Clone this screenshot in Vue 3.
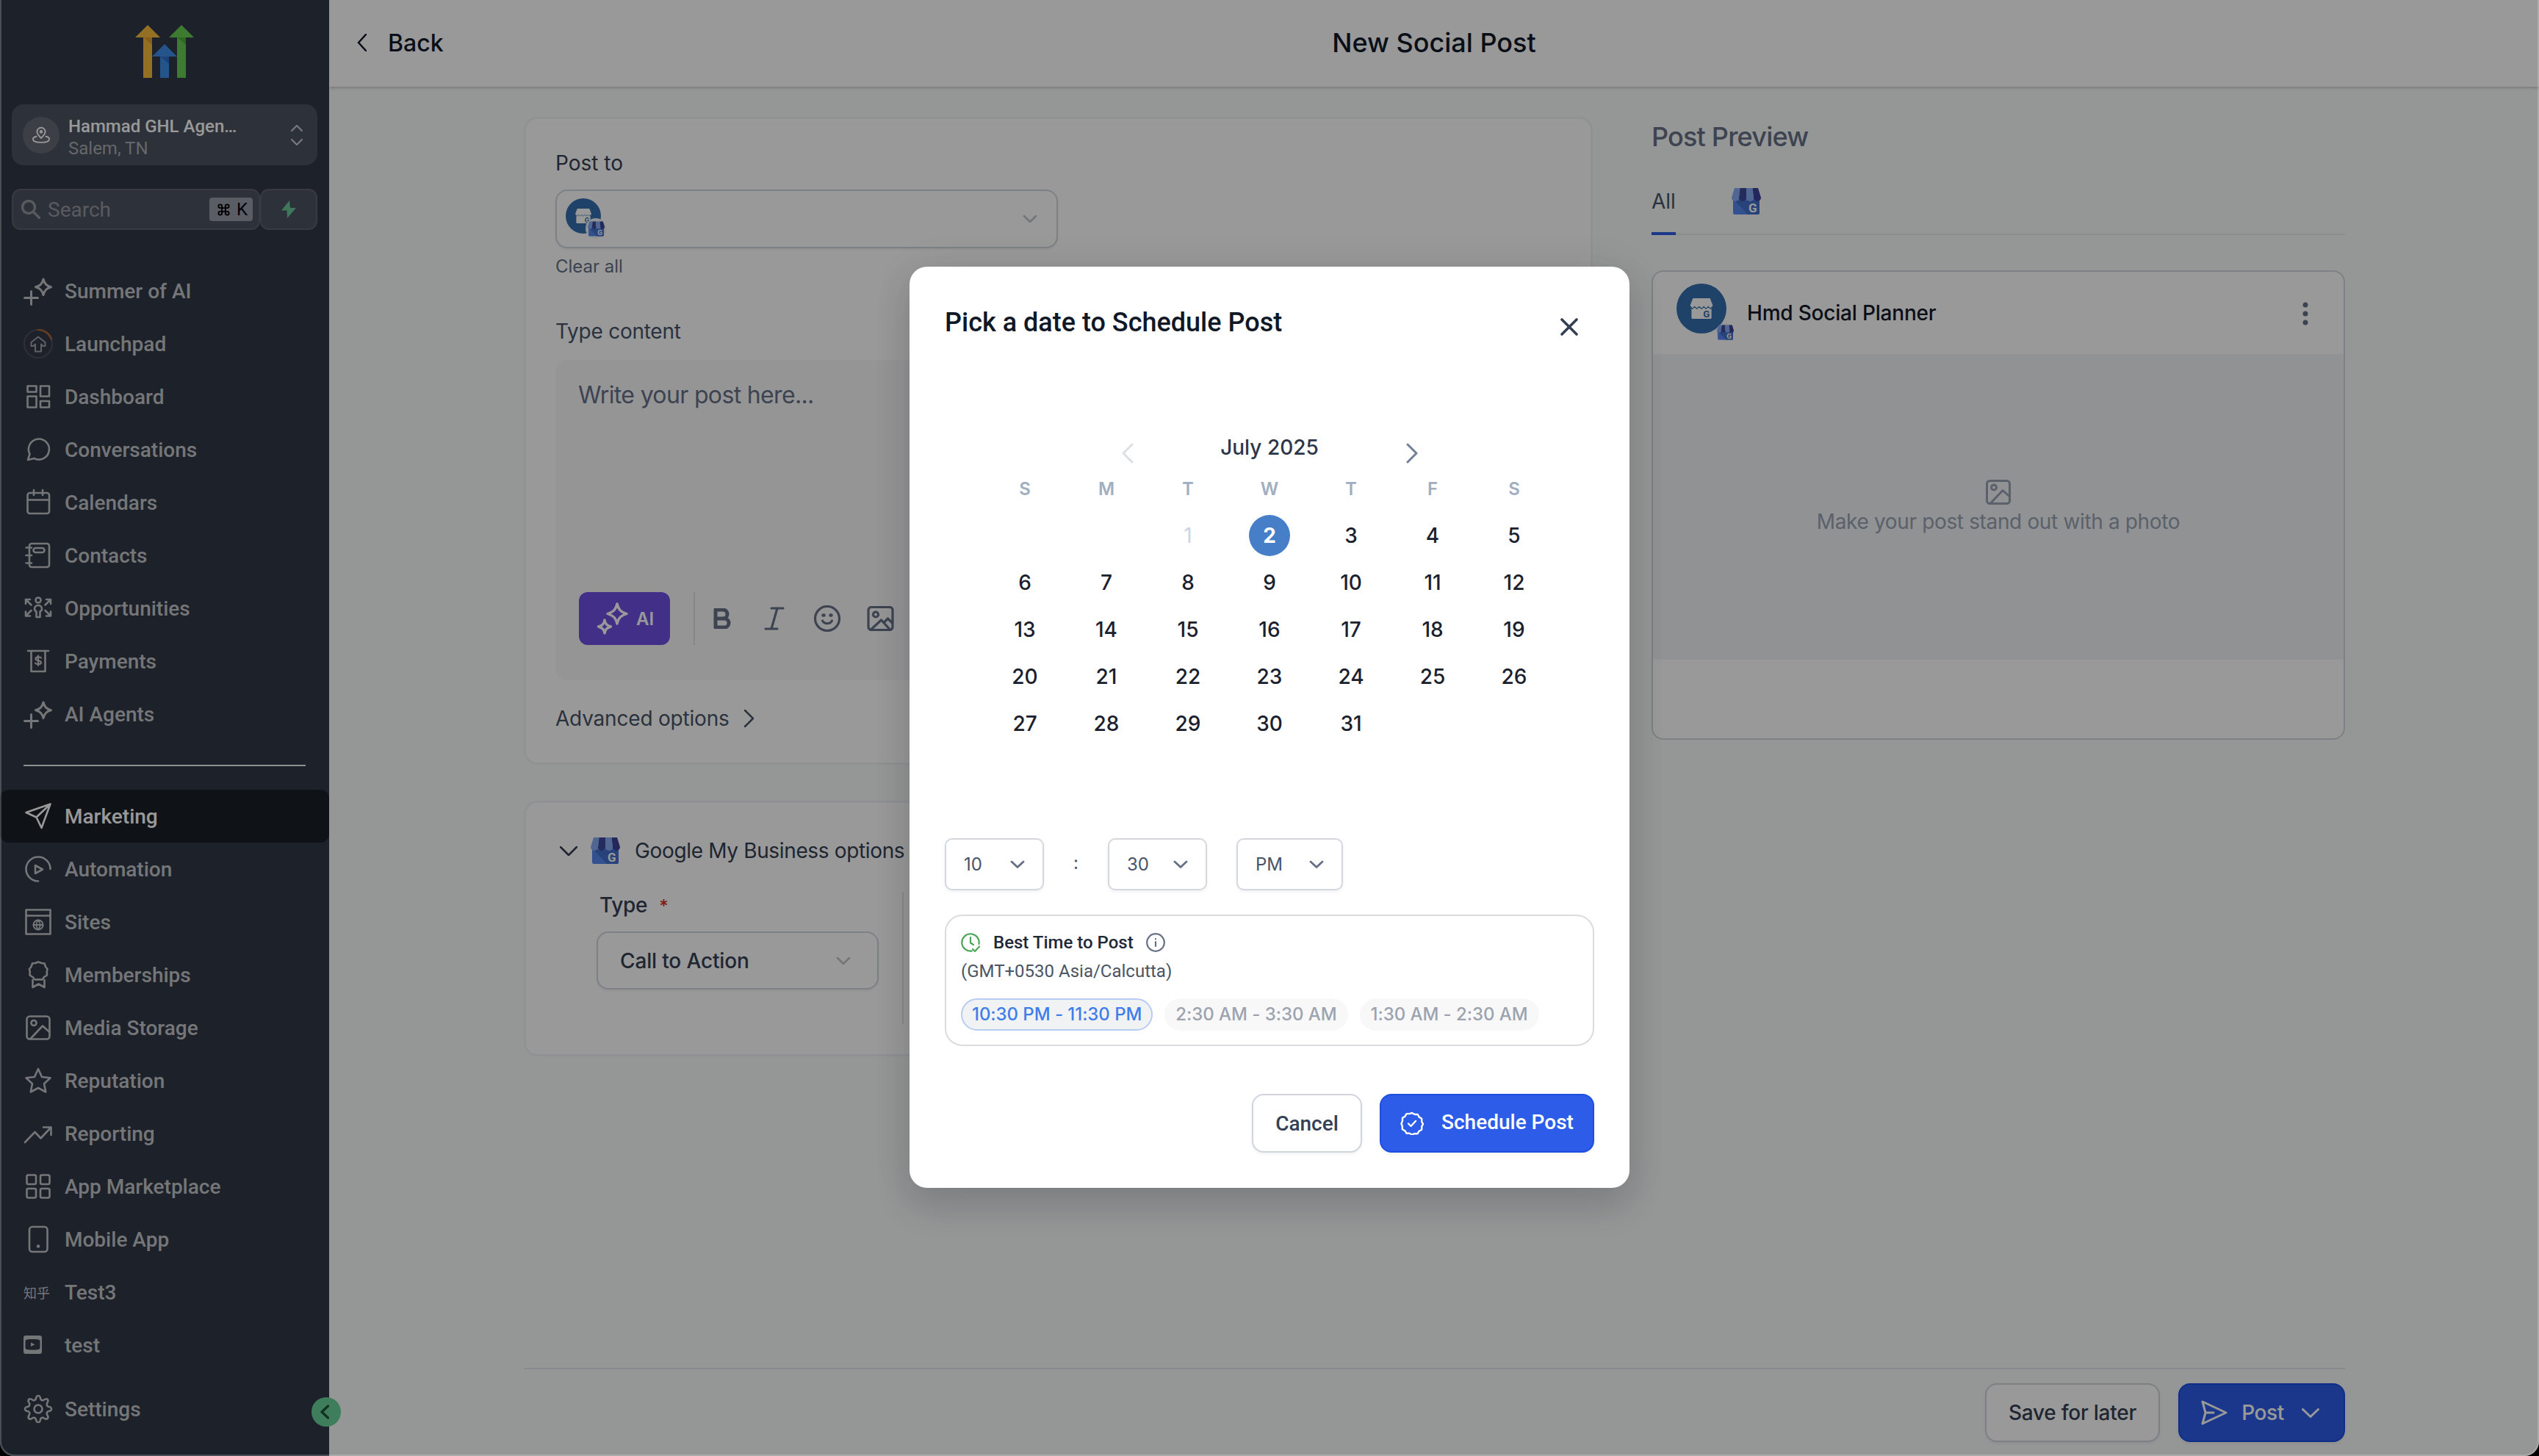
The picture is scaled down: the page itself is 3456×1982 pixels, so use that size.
<template>
  <div class="app">
    <!-- shared storefront artwork -->
    <svg class="sprite" aria-hidden="true">
      <symbol id="store" viewBox="0 0 40 36">
        <path d="M2 13h36v20.500a2.500 2.500 0 0 1-2.500 2.500h-31a2.500 2.500 0 0 1-2.500-2.500z" fill="#5588ee" />
        <path d="M4 17L22 36H35.500a2.500 2.500 0 0 0 2.500-2.500V17z" fill="#4471cc" />
        <path d="M4 0h7.500L10 13a5 5 0 0 1-10 0z" fill="#85abf5" />
        <path d="M11.500 0H20v13a5 5 0 0 1-10 0z" fill="#3d4a9c" />
        <path d="M20 0h8.500L30 13a5 5 0 0 1-10 0z" fill="#85abf5" />
        <path d="M28.500 0H36l4 13a5 5 0 0 1-10 0z" fill="#3d4199" />
      </symbol>
      <symbol id="shop" viewBox="0 0 40 36">
        <path d="M5 0h30l5 13-2.500 5V34a2 2 0 0 1-2 2h-31a2 2 0 0 1-2-2V18L0 13z" fill="#fff" />
        <path class="zigzag" d="M1 14.500l3 4 4-4 4 4 4-4 4 4 4-4 4 4 4-4 4 4 3-4" />
      </symbol>
    </svg>

    <aside class="sidebar">
      <svg class="logo" viewBox="0 0 80 72">
        <path d="M17 0l17 17H0z" fill="#f5bb3c" />
        <path d="M11 17h12v55H11z" fill="#f5bb3c" />
        <path d="M11 17h12v10z" fill="#dc9f30" />
        <path d="M63 0l17 17H46z" fill="#68cc50" />
        <path d="M57 17h12v55H57z" fill="#68cc50" />
        <path d="M57 17h12v10z" fill="#4fae35" />
        <path d="M40 26l17 17H23z" fill="#3f8bea" />
        <path d="M34 43h12v29H34z" fill="#3f8bea" />
        <path d="M34 43h12v10z" fill="#2f6fd0" />
      </svg>

      <div class="account">
        <div class="account-pin">
          <svg viewBox="0 0 24 24" v-html="icons.pin" />
        </div>
        <div class="account-text">
          <div class="account-name">Hammad GHL Agen…</div>
          <div class="account-place">Salem, TN</div>
        </div>
        <svg class="account-arrows" viewBox="0 0 16 28">
          <path d="M1 8l7-7 7 7M1 20l7 7 7-7" />
        </svg>
      </div>

      <div class="search-row">
        <div class="search">
          <svg class="search-icon" viewBox="0 0 26 26"><circle cx="10" cy="10" r="8.500" /><path d="M16 16l8.500 8.500" /></svg>
          <span>Search</span>
          <kbd>
            <svg class="cmd" viewBox="0 0 24 24"><path d="M9 9h6v6H9zM9 9H6a3 3 0 1 1 3-3zM15 9V6a3 3 0 1 1 3 3zM15 15h3a3 3 0 1 1-3 3zM9 15v3a3 3 0 1 1-3-3z" /></svg>
            K
          </kbd>
        </div>
        <div class="bolt">
          <svg viewBox="0 0 22 24"><path d="M12 0L1 13.500h7.500L9 24 21 10h-8z" stroke-linejoin="round" /></svg>
        </div>
      </div>

      <nav class="nav">
        <div v-for="item in topNav" :key="item.label" class="nav-item">
          <svg viewBox="0 0 40 40" v-html="icons[item.icon]" />
          <span>{{ item.label }}</span>
        </div>
      </nav>
      <div class="nav-divider"></div>
      <nav class="nav">
        <div v-for="item in bottomNav" :key="item.label" class="nav-item" :class="{ active: item.active }">
          <span v-if="item.icon === 'zhihu'" class="zhihu">知乎</span>
          <svg v-else viewBox="0 0 40 40" v-html="icons[item.icon]" />
          <span>{{ item.label }}</span>
        </div>
      </nav>
      <div class="nav-item settings">
        <svg viewBox="0 0 40 40" v-html="icons.gear" />
        <span>Settings</span>
      </div>
      <div class="collapse">
        <svg viewBox="0 0 12 20"><path d="M10.500 2L2 10l8.500 8" /></svg>
      </div>
    </aside>

    <main class="main">
      <header class="topbar">
        <div class="back">
          <svg viewBox="0 0 13 24"><path d="M12 1L2 12l10 11" /></svg>
          <span>Back</span>
        </div>
        <h1>New Social Post</h1>
      </header>

      <div class="content">
        <section class="composer">
          <div class="card editor-card">
            <div class="label dark">Post to</div>
            <div class="select account-select">
              <div class="avatar small">
                <svg class="avatar-shop" viewBox="0 0 40 36"><use href="#shop" /><text class="g blue" x="23" y="34">G</text></svg>
                <div class="avatar-badge"><svg viewBox="0 0 40 36"><use href="#store" /><text class="g" x="23" y="33">G</text></svg></div>
              </div>
              <svg class="chev" viewBox="0 0 20 10"><path d="M2 1l8 8 8-8" /></svg>
            </div>
            <div class="clear">Clear all</div>
            <div class="label type-content">Type content</div>
            <div class="editor">
              <div class="placeholder">Write your post here...</div>
              <div class="toolbar">
                <div class="ai-button">
                  <svg viewBox="0 0 44 44">
                    <path d="M28 2c2 8 5 11 13 13.500-8 2.500-11 5.500-13 13.500-2-8-5-11-13-13.500 8-2.500 11-5.500 13-13.500z" />
                    <path d="M11 24c1 5.500 3 7.500 8.500 9-5.500 1.500-7.500 3.500-8.500 9-1-5.500-3-7.500-8.500-9 5.500-1.500 7.500-3.500 8.500-9z" />
                  </svg>
                  AI
                </div>
                <div class="tool-divider"></div>
                <div class="tools">
                  <svg class="tool-b" viewBox="0 0 24 28"><path d="M3 2h10a6 6 0 0 1 0 12H3zM3 14h12a6 6 0 0 1 0 12H3z" /></svg>
                  <svg class="tool-i" viewBox="0 0 28 32"><path d="M10 2h16M2 30h16M18 2L10 30" /></svg>
                  <svg class="tool-s" viewBox="0 0 36 36"><circle cx="18" cy="18" r="16.500" /><path d="M11.500 21c3 5 10 5 13 0" /><path d="M12.500 13.500h1M22.500 13.500h1" stroke-width="4.500" /></svg>
                  <svg class="tool-m" viewBox="0 0 36 34"><rect x="1.500" y="1.500" width="33" height="31" rx="4" /><circle cx="11.500" cy="11.500" r="3.500" /><path d="M5 32l14-13 11 12M23 22l5-5 6 6" /></svg>
                </div>
              </div>
            </div>
            <div class="advanced">
              <span>Advanced options</span>
              <svg viewBox="0 0 13 24"><path d="M1 1l11 11L1 23" /></svg>
            </div>
          </div>

          <div class="card gmb-card">
            <div class="gmb-head">
              <svg class="gmb-chev" viewBox="0 0 24 13"><path d="M1 1l11 11L23 1" /></svg>
              <svg class="store" viewBox="0 0 40 36"><use href="#store" /><text class="g" x="23" y="33">G</text></svg>
              <span>Google My Business options</span>
            </div>
            <div class="gmb-body">
              <div class="gmb-field">
                <div class="field-label">Type <em>*</em></div>
                <div class="select type-select">
                  <span>Call to Action</span>
                  <svg class="chev" viewBox="0 0 20 10"><path d="M2 1l8 8 8-8" /></svg>
                </div>
              </div>
              <div class="gmb-divider"></div>
            </div>
          </div>
        </section>

        <section class="preview">
          <h2>Post Preview</h2>
          <div class="tabs">
            <div class="tab">All</div>
            <svg class="store" viewBox="0 0 40 36"><use href="#store" /><text class="g" x="23" y="33">G</text></svg>
          </div>
          <div class="preview-card">
            <div class="preview-head">
              <div class="avatar">
                <svg class="avatar-shop" viewBox="0 0 40 36"><use href="#shop" /><text class="g blue" x="23" y="34">G</text></svg>
                <div class="avatar-badge"><svg viewBox="0 0 40 36"><use href="#store" /><text class="g" x="23" y="33">G</text></svg></div>
              </div>
              <span>Hmd Social Planner</span>
              <svg class="kebab" viewBox="0 0 8 32"><circle cx="4" cy="4" r="3.500" /><circle cx="4" cy="16" r="3.500" /><circle cx="4" cy="28" r="3.500" /></svg>
            </div>
            <div class="preview-photo">
              <svg viewBox="0 0 40 40" v-html="icons.media" />
              <span>Make your post stand out with a photo</span>
            </div>
          </div>
        </section>
      </div>

      <footer class="footer">
        <div class="btn save-btn">Save for later</div>
        <div class="btn primary post-btn">
          <svg class="send" viewBox="0 0 36 34"><path d="M2 2l32 15L2 32l4-15zM6 17h11" /></svg>
          <span>Post</span>
          <svg class="post-chev" viewBox="0 0 24 13"><path d="M1.500 1.500L12 11.500 22.500 1.500" /></svg>
        </div>
      </footer>
    </main>

    <div class="overlay">
      <div class="modal">
        <div class="modal-head">
          <h3>Pick a date to Schedule Post</h3>
          <svg viewBox="0 0 24 24"><path d="M2 2l20 20M22 2L2 22" /></svg>
        </div>

        <div class="calendar">
          <div class="month">
            <svg class="off" viewBox="0 0 16 28"><path d="M14 2L2 14l12 12" /></svg>
            <span>July 2025</span>
            <svg viewBox="0 0 16 28"><path d="M2 2l12 12L2 26" /></svg>
          </div>
          <div class="week">
            <span v-for="(d, i) in weekdays" :key="i">{{ d }}</span>
          </div>
          <div class="days">
            <div v-for="(day, i) in days" :key="i" class="day" :class="{ past: day === 1, selected: day === selected }">
              <span v-if="day">{{ day }}</span>
            </div>
          </div>
        </div>

        <div class="time">
          <div class="time-select">10 <svg viewBox="0 0 20 11"><path d="M2 2l8 7.500L18 2" /></svg></div>
          <div class="colon">:</div>
          <div class="time-select">30 <svg viewBox="0 0 20 11"><path d="M2 2l8 7.500L18 2" /></svg></div>
          <div class="time-select period">PM <svg viewBox="0 0 20 11"><path d="M2 2l8 7.500L18 2" /></svg></div>
        </div>

        <div class="best">
          <div class="best-head">
            <svg class="clock" viewBox="0 0 26 26"><path d="M24.500 15A11.700 11.700 0 1 0 15 24.500M13 6v7.500l4 2.500M16 22l3 3 6-6.500" /></svg>
            <span>Best Time to Post</span>
            <svg class="info" viewBox="0 0 26 26"><circle cx="13" cy="13" r="11.800" /><path d="M13 12v6M13 8v.3" /></svg>
          </div>
          <div class="best-zone">(GMT+0530 Asia/Calcutta)</div>
          <div class="chips">
            <span v-for="(slot, i) in slots" :key="slot" class="chip" :class="{ on: i === 0 }">{{ slot }}</span>
          </div>
        </div>

        <div class="actions">
          <div class="btn cancel">Cancel</div>
          <div class="btn primary schedule">
            <svg viewBox="0 0 32 32">
              <path d="M16 2l3.600 2 4.100 0 2 3.600 3.500 2.100 0 4.200L31 17l-1.800 3.600 0 4.100-3.500 2-2.100 3.500-4.100 0L16 31.500l-3.500-1.800-4.100 0-2.100-3.500-3.500-2 0-4.100L1.500 16.500l1.500-3.600 0-4.200 3.500-2 2-3.600 4.100 0z" />
              <path d="M11 16.500l3.500 3.500 6.500-7" />
            </svg>
            <span>Schedule Post</span>
          </div>
        </div>
      </div>
    </div>
    <div class="frame"></div>
  </div>
</template>

<script setup>
    import { ref } from 'vue';

    const sparkle = '<path d="M27 4c1.800 6.500 4 8.800 10.500 10.800-6.500 2-8.700 4.200-10.500 10.700-1.800-6.500-4-8.700-10.500-10.700C23 12.800 25.200 10.500 27 4z" stroke-width="3"/><path d="M10.500 20.500v18M1.500 29.500h18" stroke-width="3"/>';

    // drawn on a 40x40 grid, stroke is inherited from the nav item
    const icons = {
        pin: '<path d="M12 15.500c-3-3-4.800-5-4.800-7.500a4.800 4.800 0 0 1 9.600 0c0 2.500-1.800 4.500-4.800 7.500z"/><circle cx="12" cy="8" r="1.200"/><path d="M6.500 13.500c-2.500.6-4 1.700-4 3C2.500 19 6.500 20.500 12 20.500s9.500-1.500 9.500-4c0-1.300-1.500-2.400-4-3"/>',
        sparkle,
        launch: '<circle cx="20" cy="20" r="19" stroke="#4c525c" stroke-width="2"/><path d="M20 1a19 19 0 0 1 18 12.500" stroke="#a8663a" stroke-width="2.600"/><path d="M20 10.500l9.500 7.500v5h-3l-2.500-2.500v10h-8v-10L13.500 23h-3v-5z" stroke-width="2" stroke="#a0a2a6"/>',
        dashboard: '<path d="M5.500 5.500h12v8h-12zM23 5.500h12v14H23zM5.500 19.500h12v15h-12zM23 26h12v8.500H23z"/>',
        chat: '<path d="M6 34l2.500-8A14 14 0 1 1 14.500 32z"/>',
        calendar: '<rect x="5.500" y="7" width="29.500" height="28" rx="3"/><path d="M5.500 16.500H35M14 3v7M26 3v7"/>',
        contacts: '<rect x="8" y="4" width="27" height="32" rx="3"/><rect x="13.500" y="10" width="15" height="6" rx="3"/><path d="M3.500 9.500H11M3.500 20H11M3.500 30.500H11"/>',
        opps: '<circle cx="20" cy="9" r="3.500"/><path d="M20 16c-3.500 0-5 2.500-5 5 0 2 1.500 3 2.500 3.500V32h5v-7.500c1-.5 2.500-1.500 2.500-3.500 0-2.500-1.500-5-5-5z"/><path d="M3 14V8h6M3.500 8.500l7 7M37 14V8h-6M36.500 8.500l-7 7M3 24.500v6h6M3.500 30l7-7M37 24.500v6h-6M36.500 30l-7-7"/>',
        payments: '<path d="M6 6h28M10.500 6v28h19V6"/><path d="M24 15.500c-1-1.500-7.500-2-7.500 1.200 0 3.300 7.500 1.700 7.500 5 0 3-6.500 3-8 1M20 12.500v13.500" stroke-width="2.200"/>',
        send: '<path d="M36.500 3.500L3.500 15l14 6.500 7 14.500zM17.500 21.500l19-18"/>',
        automation: '<path d="M36.500 20A16.500 16.500 0 1 0 20 36.500"/><path d="M16 15v11l10-5.500z"/>',
        sites: '<path d="M3.500 3.500h33v33h-33zM3.500 11.500h33"/><circle cx="20" cy="24" r="6.500" stroke-width="2"/><path d="M13.500 24h13M20 17.500c-3.500 4-3.500 9 0 13M20 17.500c3.500 4 3.500 9 0 13" stroke-width="1.800"/>',
        badge: '<path d="M20 2.500l4.500 1.500 4 .5 1.500 4.500 2.500 3-.8 4.500.3 4-4 2.500-2.500 3.500-5-.2-5 .2-3-3.500-4-2.500.3-4-.8-4.500 2.500-3L12 4.500l4-.5z"/><path d="M12.500 27v10l8-4.500 8 4.500V27"/>',
        media: '<rect x="4.500" y="4.500" width="31" height="31" rx="4"/><circle cx="14" cy="13.500" r="3.500"/><path d="M9.500 35L26 17.500l9.500 8.500"/>',
        star: '<path d="M20 4l5 11 11.500 1.200-8.500 8 2.300 11.300L20 30l-10.300 5.500L12 24.200l-8.500-8L15 15z"/>',
        trend: '<path d="M2 32L15.500 18l8 8.500L37 12M27 11.500h10.500V22"/>',
        apps: '<rect x="4.500" y="4.500" width="12.500" height="12.500" rx="2"/><rect x="23" y="4.500" width="12.500" height="12.500" rx="2"/><rect x="4.500" y="23" width="12.500" height="12.500" rx="2"/><rect x="23" y="23" width="12.500" height="12.500" rx="2"/>',
        mobile: '<rect x="8" y="3" width="24.500" height="34" rx="4"/><circle cx="20" cy="29.500" r="1.500" fill="currentColor" stroke-width="1.500"/>',
        video: '<path d="M3 7h19a3 3 0 0 1 3 3v19a3 3 0 0 1-3 3H3a3 3 0 0 1-3-3V10a3 3 0 0 1 3-3zM5 12.500c-1.500 0-2.500 1-2.500 2.500v8.500c0 1.500 1 2.500 2.500 2.500 5 .7 10 .7 15 0 1.500 0 2.500-1 2.500-2.500V15c0-1.500-1-2.500-2.500-2.500-5-.6-10-.6-15 0z" fill="currentColor" fill-rule="evenodd" stroke="none"/><path d="M10 16.500v5.500l5.500-2.700z" fill="currentColor" stroke="none"/>',
        gear: '<path d="M17 5.500C17.500 2.500 18 2 20 2s2.500.5 3 3.500c.3 2.500 3 3.500 5 2 2.500-1.800 3.500-1.800 4.700-.5s1.300 2.300-.4 4.700c-1.500 2-.3 5 2.200 5.300 3 .5 3.500 1 3.500 3s-.5 2.500-3.500 3c-2.500.3-3.700 3.300-2.200 5.300 1.700 2.400 1.700 3.400.4 4.700s-2.200 1.300-4.700-.5c-2-1.500-4.700-.5-5 2-.5 3-1 3.500-3 3.500s-2.500-.5-3-3.500c-.3-2.500-3-3.500-5-2-2.500 1.800-3.500 1.800-4.700.5s-1.300-2.300.4-4.700c1.500-2 .3-5-2.200-5.300-3-.5-3.500-1-3.500-3s.5-2.500 3.500-3c2.500-.3 3.700-3.300 2.200-5.300C6 9.300 6 8.300 7.300 7s2.200-1.300 4.700.5c2 1.500 4.700.5 5-2z"/><circle cx="20" cy="20" r="5.500"/>',
    };

    const topNav = ref([
        { icon: 'sparkle', label: 'Summer of AI' },
        { icon: 'launch', label: 'Launchpad' },
        { icon: 'dashboard', label: 'Dashboard' },
        { icon: 'chat', label: 'Conversations' },
        { icon: 'calendar', label: 'Calendars' },
        { icon: 'contacts', label: 'Contacts' },
        { icon: 'opps', label: 'Opportunities' },
        { icon: 'payments', label: 'Payments' },
        { icon: 'sparkle', label: 'AI Agents' },
    ]);
    const bottomNav = ref([
        { icon: 'send', label: 'Marketing', active: true },
        { icon: 'automation', label: 'Automation' },
        { icon: 'sites', label: 'Sites' },
        { icon: 'badge', label: 'Memberships' },
        { icon: 'media', label: 'Media Storage' },
        { icon: 'star', label: 'Reputation' },
        { icon: 'trend', label: 'Reporting' },
        { icon: 'apps', label: 'App Marketplace' },
        { icon: 'mobile', label: 'Mobile App' },
        { icon: 'zhihu', label: 'Test3' },
        { icon: 'video', label: 'test' },
    ]);

    const weekdays = ['S', 'M', 'T', 'W', 'T', 'F', 'S'];
    const selected = ref(2);
    // July 2025 starts on a Tuesday
    const days = [null, null, ...Array.from({ length: 31 }, (_, i) => i + 1)];
    const slots = ['10:30 PM - 11:30 PM', '2:30 AM - 3:30 AM', '1:30 AM - 2:30 AM'];
</script>

<style>
  html, body {
    background: #000;
    overflow: hidden;
  }
</style>

<style scoped>
  * {
    box-sizing: border-box;
  }
  svg {
    display: block;
    flex: none;
    fill: none;
    stroke: currentColor;
    stroke-width: 2.6;
    stroke-linecap: round;
    stroke-linejoin: round;
  }
  h1, h2, h3 {
    margin: 0;
    font-weight: 500;
  }
  .app {
    position: relative;
    display: flex;
    width: 3456px;
    height: 1982px;
    overflow: hidden;
    border-radius: 0 0 20px 20px;
    background: #f9fafb;
    font-family: Inter, "Noto Sans", sans-serif;
    font-size: 28px;
    white-space: nowrap;
  }
  .sprite {
    position: absolute;
    width: 0;
    height: 0;
  }
  .sprite path {
    stroke: none;
  }
  .sprite .zigzag {
    stroke: #356fae;
    stroke-width: 1.4;
  }
  .g {
    fill: #fff;
    stroke: none;
    font: 700 17px Roboto, sans-serif;
  }
  .g.blue {
    fill: #356fae;
  }

  /* sidebar */
  .sidebar {
    position: relative;
    z-index: 1;
    width: 448px;
    height: 1982px;
    padding-top: 34px;
    background: #303747;
    color: #c3c5c8;
    font-family: Roboto, sans-serif;
  }
  .logo {
    width: 80px;
    height: 72px;
    margin: 0 auto;
    stroke: none;
  }
  .account {
    display: flex;
    align-items: center;
    height: 83px;
    margin: 36px 16px 0;
    padding: 0 20px 0 15px;
    border-radius: 16px;
    background: #4c535f;
    color: #fff;
  }
  .account-pin {
    display: flex;
    align-items: center;
    justify-content: center;
    width: 50px;
    height: 50px;
    border-radius: 50%;
    background: #656a74;
  }
  .account-pin svg {
    width: 28px;
    height: 28px;
    stroke-width: 1.6;
  }
  .account-text {
    flex: 1;
    padding: 6px 0 0 12px;
    font-size: 24px;
    line-height: 30px;
  }
  .account-name {
    font-weight: 500;
  }
  .account-place {
    color: #a9acb1;
  }
  .account-arrows {
    width: 16px;
    height: 28px;
    color: #c8cacd;
    stroke-width: 2.2;
  }
  .search-row {
    display: flex;
    margin: 32px 16px 0;
  }
  .search, .bolt {
    display: flex;
    align-items: center;
    height: 56px;
    border: 2px solid #5c616c;
    border-radius: 12px;
    background: #4c535f;
  }
  .search {
    width: 338px;
    padding: 0 8px 0 11px;
    color: #94979e;
  }
  .search span {
    flex: 1;
    padding-left: 10px;
  }
  .search-icon {
    width: 26px;
    height: 26px;
    stroke-width: 3.4;
  }
  .search kbd {
    display: flex;
    align-items: center;
    gap: 8px;
    height: 32px;
    width: 59px;
    padding-left: 10px;
    border-radius: 4px;
    background: #979ba6;
    color: #000;
    font-family: Roboto, sans-serif;
    font-size: 24px;
  }
  .cmd {
    width: 19px;
    height: 19px;
    stroke-width: 2.4;
  }
  .bolt {
    width: 78px;
    justify-content: center;
  }
  .bolt svg {
    width: 22px;
    height: 24px;
    fill: #68c698;
    stroke: none;
  }
  .nav {
    margin-top: 47px;
  }
  .nav-item {
    display: flex;
    align-items: center;
    gap: 16px;
    height: 72px;
    padding-left: 32px;
    font-weight: 500;
  }
  .nav-item svg {
    width: 40px;
    height: 40px;
  }
  .nav-item.active {
    border-radius: 12px;
    background: #1a1e27;
    color: #fff;
  }
  .zhihu {
    width: 40px;
    font: 400 18px "Noto Sans CJK SC", sans-serif;
  }
  .nav-divider {
    height: 2px;
    margin: 33px 32px 0;
    background: #eee;
  }
  .nav-divider + .nav {
    margin-top: 32px;
  }
  .settings {
    margin-top: 15px;
  }
  .collapse {
    position: absolute;
    left: 424px;
    top: 1902px;
    display: flex;
    align-items: center;
    justify-content: center;
    width: 40px;
    height: 40px;
    padding-right: 4px;
    border-radius: 50%;
    background: #68d399;
    color: #22543d;
  }
  .collapse svg {
    width: 12px;
    height: 20px;
    stroke-width: 3.4;
  }

  /* page */
  .main {
    display: flex;
    flex-direction: column;
    flex: 1;
    color: #344054;
  }
  .topbar {
    position: relative;
    display: flex;
    align-items: center;
    justify-content: center;
    height: 118px;
    padding-bottom: 2px;
    background: #fff;
    box-shadow: 0 2px 4px rgba(40, 60, 50, .22);
    color: #101828;
  }
  .topbar h1 {
    font-size: 36px;
  }
  .back {
    position: absolute;
    left: 38px;
    display: flex;
    align-items: center;
    gap: 29px;
    font-size: 32px;
    font-weight: 500;
  }
  .back svg {
    width: 13px;
    height: 24px;
  }
  .content {
    display: flex;
    flex: 1;
    gap: 80px;
    padding: 41px 0 0 265px;
  }
  .composer {
    width: 1455px;
  }
  .card {
    border: 3px solid #f0f2f5;
    border-radius: 18px;
    background: #fff;
  }
  .editor-card {
    height: 882px;
    padding: 42px 40px 0;
  }
  .label {
    line-height: 36px;
    color: #475467;
  }
  .label.dark {
    color: #344054;
  }
  .select {
    display: flex;
    align-items: center;
    justify-content: space-between;
    border: 2px solid #d0d5dd;
    border-radius: 16px;
    background: #fff;
    box-shadow: 0 2px 3px rgba(16, 24, 40, .05);
  }
  .chev {
    width: 20px;
    height: 10px;
    color: #c0c4cc;
  }
  .account-select {
    width: 684px;
    height: 80px;
    margin-top: 18px;
    padding: 0 26px 0 12px;
  }
  .avatar {
    position: relative;
    display: flex;
    align-items: center;
    justify-content: center;
    width: 68px;
    height: 68px;
    border-radius: 50%;
    background: #356fae;
  }
  .avatar-shop {
    width: 32px;
    height: 28px;
  }
  .avatar-badge {
    position: absolute;
    right: -10px;
    bottom: -10px;
    display: flex;
    align-items: center;
    justify-content: center;
    width: 24px;
    height: 24px;
    border-radius: 50%;
    background: #f2f4f7;
  }
  .avatar-badge svg {
    width: 23px;
    height: 21px;
  }
  .avatar.small {
    width: 48px;
    height: 48px;
    margin-bottom: 8px;
  }
  .small .avatar-shop {
    width: 22px;
    height: 20px;
  }
  .small .avatar-badge {
    right: -7px;
    bottom: -7px;
    width: 28px;
    height: 28px;
  }
  .clear {
    margin-top: 10px;
    font-size: 24px;
    line-height: 30px;
    color: #667085;
  }
  .type-content {
    margin-top: 55px;
    letter-spacing: -.25px;
  }
  .editor {
    display: flex;
    flex-direction: column;
    justify-content: space-between;
    height: 436px;
    margin-top: 21px;
    padding: 28px 32px 48px 31px;
    border-radius: 16px;
    background: #f8f9fb;
  }
  .placeholder {
    font-size: 32px;
    line-height: 40px;
    letter-spacing: -.65px;
    color: #667085;
  }
  .toolbar {
    display: flex;
    align-items: center;
    height: 72px;
    padding-left: 1px;
    color: #667085;
  }
  .ai-button {
    display: flex;
    align-items: center;
    gap: 10px;
    width: 124px;
    height: 72px;
    padding-left: 24px;
    border-radius: 12px;
    background: #6e4fe1;
    color: #fff;
    font-size: 24px;
    font-weight: 600;
  }
  .ai-button svg {
    width: 44px;
    height: 44px;
    stroke-width: 3.4;
  }
  .tool-divider {
    width: 2px;
    height: 72px;
    margin-left: 32px;
    background: #dfe2e7;
  }
  .tools {
    display: flex;
    align-items: center;
    padding-left: 25px;
  }
  .tools svg {
    stroke-width: 3.2;
  }
  .tools .tool-b {
    width: 24px;
    height: 28px;
    stroke-width: 5;
  }
  .tool-i {
    width: 28px;
    height: 32px;
    margin-left: 45px;
  }
  .tool-s {
    width: 36px;
    height: 36px;
    margin-left: 40px;
  }
  .tool-m {
    width: 37px;
    height: 34px;
    margin-left: 36px;
  }
  .advanced {
    display: flex;
    align-items: center;
    gap: 20px;
    height: 36px;
    margin-top: 34px;
    letter-spacing: -.2px;
    color: #475467;
  }
  .advanced svg {
    width: 13px;
    height: 24px;
  }
  .gmb-card {
    height: 348px;
    margin-top: 49px;
    padding-top: 45px;
  }
  .gmb-head {
    display: flex;
    align-items: center;
    height: 40px;
    padding-left: 46px;
    letter-spacing: -.35px;
  }
  .gmb-chev {
    width: 24px;
    height: 13px;
    margin-right: 18px;
  }
  .store {
    width: 40px;
    height: 36px;
  }
  .gmb-head span {
    padding-left: 20px;
  }
  .gmb-body {
    display: flex;
    gap: 32px;
    padding: 36px 0 0 96px;
  }
  .gmb-field {
    width: 384px;
  }
  .field-label {
    padding-left: 4px;
    line-height: 36px;
    letter-spacing: -.3px;
    font-weight: 500;
  }
  .field-label em {
    padding-left: 9px;
    color: #d92d20;
    font-size: 24px;
    font-style: normal;
  }
  .type-select {
    height: 79px;
    margin-top: 16px;
    padding: 0 36px 0 30px;
    letter-spacing: -.15px;
    font-weight: 500;
  }
  .gmb-divider {
    width: 2px;
    height: 180px;
    background: #e4e7ec;
  }

  /* preview column */
  .preview {
    width: 944px;
    padding-top: 5px;
  }
  .preview h2 {
    font-size: 36px;
    line-height: 44px;
    letter-spacing: -.8px;
    color: #667085;
  }
  .tabs {
    display: flex;
    height: 84px;
    margin-top: 28px;
    box-shadow: inset 0 -2px #e6e8ec;
  }
  .tab {
    height: 84px;
    border-bottom: 4px solid #2f5ae6;
    line-height: 76px;
    color: #475467;
  }
  .tabs .store {
    margin: 20px 0 0 76px;
  }
  .preview-card {
    height: 639px;
    margin-top: 48px;
    overflow: hidden;
    border: 2px solid #d0d5dd;
    border-radius: 16px;
    background: #fff;
  }
  .preview-head {
    display: flex;
    height: 112px;
    padding: 16px 48px 0 32px;
    color: #101828;
    font-weight: 500;
  }
  .preview-head span {
    flex: 1;
    padding-left: 28px;
    line-height: 80px;
    letter-spacing: -.2px;
  }
  .kebab {
    width: 8px;
    height: 32px;
    margin-top: 25px;
    fill: #667085;
    stroke: none;
  }
  .preview-photo {
    display: flex;
    flex-direction: column;
    align-items: center;
    height: 416px;
    padding-top: 168px;
    background: #f2f4f7;
    color: #98a2b3;
  }
  .preview-photo svg {
    width: 40px;
    height: 40px;
    stroke-width: 3;
  }
  .preview-photo span {
    margin-top: 2px;
    line-height: 36px;
    letter-spacing: -.35px;
  }

  /* footer */
  .footer {
    display: flex;
    justify-content: flex-end;
    gap: 25px;
    width: 2479px;
    height: 120px;
    margin-left: 265px;
    padding-top: 19px;
    border-top: 2px solid #e4e7ec;
  }
  .btn {
    display: flex;
    align-items: center;
    justify-content: center;
    width: 238px;
    height: 80px;
    border: 2px solid #d0d5dd;
    border-radius: 16px;
    background: #fff;
    box-shadow: 0 2px 4px rgba(16, 24, 40, .06);
    color: #344054;
    font-weight: 500;
  }
  .btn.primary {
    border-color: #1d4ee0;
    background: #2d5de8;
    color: #fff;
  }
  .save-btn {
    letter-spacing: -.25px;
  }
  .post-btn {
    width: 227px;
    gap: 19px;
    padding-right: 4px;
    letter-spacing: -.4px;
  }
  .send {
    width: 36px;
    height: 34px;
    stroke-width: 3;
  }
  .post-chev {
    width: 24px;
    height: 13px;
    margin-left: 5px;
    stroke-width: 3;
  }

  /* schedule modal */
  .overlay {
    position: absolute;
    inset: 0;
    z-index: 2;
    display: flex;
    align-items: center;
    justify-content: center;
    padding-bottom: 2px;
    background: rgba(0, 0, 0, .4);
  }
  .modal {
    width: 980px;
    height: 1254px;
    padding: 51px 48px 0;
    border-radius: 24px;
    background: #fff;
    box-shadow: 0 24px 48px rgba(16, 24, 40, .16), 0 0 60px rgba(16, 24, 40, .06);
  }
  .modal-head {
    display: flex;
    justify-content: space-between;
    height: 48px;
    padding-right: 22px;
    color: #101828;
  }
  .modal-head h3 {
    padding-top: 1px;
    font: 500 36px/48px Roboto, sans-serif;
  }
  .modal-head svg {
    width: 24px;
    height: 24px;
    margin-top: 19px;
    color: #344054;
    stroke-width: 3.6;
  }
  .calendar {
    width: 777px;
    margin: 127px auto 0;
  }
  .month {
    display: flex;
    justify-content: space-between;
    height: 40px;
    padding: 0 187px;
    line-height: 40px;
    color: #2d3748;
    font-weight: 500;
  }
  .month svg {
    width: 16px;
    height: 28px;
    margin-top: 14px;
    color: #718096;
    stroke-width: 3;
  }
  .month svg.off {
    color: #dbdfe6;
  }
  .week, .days {
    display: grid;
    grid-template-columns: repeat(7, 111px);
    text-align: center;
  }
  .week {
    margin-top: 21px;
    color: #a0aec0;
    font-size: 24px;
    font-weight: 600;
    line-height: 32px;
  }
  .days {
    grid-auto-rows: 64px;
    margin-top: 15px;
    color: #1a202c;
    font-weight: 500;
  }
  .day {
    display: flex;
    align-items: center;
    justify-content: center;
  }
  .day span {
    width: 56px;
    border-radius: 50%;
    line-height: 56px;
  }
  .day.past {
    color: #cbd5e0;
    font-weight: 400;
  }
  .day.selected span {
    background: #467fc8;
    color: #fff;
    font-weight: 700;
  }
  .time {
    display: flex;
    margin-top: 124px;
    color: #475467;
    font-size: 24px;
    line-height: 68px;
  }
  .time-select {
    display: flex;
    align-items: center;
    justify-content: space-between;
    width: 135px;
    height: 71px;
    padding: 0 24px;
    border: 2px solid #d3d8df;
    border-radius: 10px;
    box-shadow: 0 2px 4px rgba(16, 24, 40, .06);
  }
  .time-select svg {
    width: 20px;
    height: 11px;
    color: #667085;
    stroke-width: 2.8;
  }
  .colon {
    width: 87px;
    text-align: center;
  }
  .period {
    width: 145px;
    margin-left: 40px;
  }
  .best {
    height: 179px;
    margin-top: 33px;
    padding: 20px 20px 0;
    border: 2px solid #dcdcde;
    border-radius: 24px;
    font-family: Roboto, sans-serif;
    font-size: 24px;
  }
  .best-head {
    display: flex;
    align-items: center;
    height: 32px;
    color: #1f2937;
    font-weight: 500;
  }
  .best-head svg {
    width: 26px;
    height: 26px;
    stroke-width: 2.2;
  }
  .best-head span {
    padding: 0 17px 0 18px;
  }
  .clock {
    color: #4ba656;
  }
  .info {
    color: #667085;
  }
  .best-zone {
    margin-top: 7px;
    line-height: 32px;
    color: #4b5563;
  }
  .chips {
    display: flex;
    gap: 16px;
    margin-top: 21px;
    font-family: Inter, sans-serif;
    font-weight: 500;
  }
  .chip {
    height: 44px;
    padding: 0 13px;
    border: 2px solid transparent;
    border-radius: 22px;
    background: #f8f8f9;
    line-height: 40px;
    letter-spacing: -.05px;
    color: #9ca3af;
  }
  .chip.on {
    border-color: #b7ccf3;
    background: #f1f2f3;
    color: #3f7eea;
  }
  .actions {
    display: flex;
    justify-content: flex-end;
    gap: 24px;
    margin-top: 65px;
    font-family: Roboto, sans-serif;
  }
  .cancel {
    width: 150px;
  }
  .schedule {
    width: 292px;
    gap: 24px;
  }
  .schedule svg {
    width: 32px;
    height: 32px;
    stroke-width: 2.4;
  }
  .schedule span {
    margin-top: -4px;
  }
  .frame {
    position: absolute;
    inset: 0;
    z-index: 3;
    border: 2px solid rgba(255, 255, 255, .2);
    border-top: 0;
    border-radius: 0 0 20px 20px;
  }
</style>
